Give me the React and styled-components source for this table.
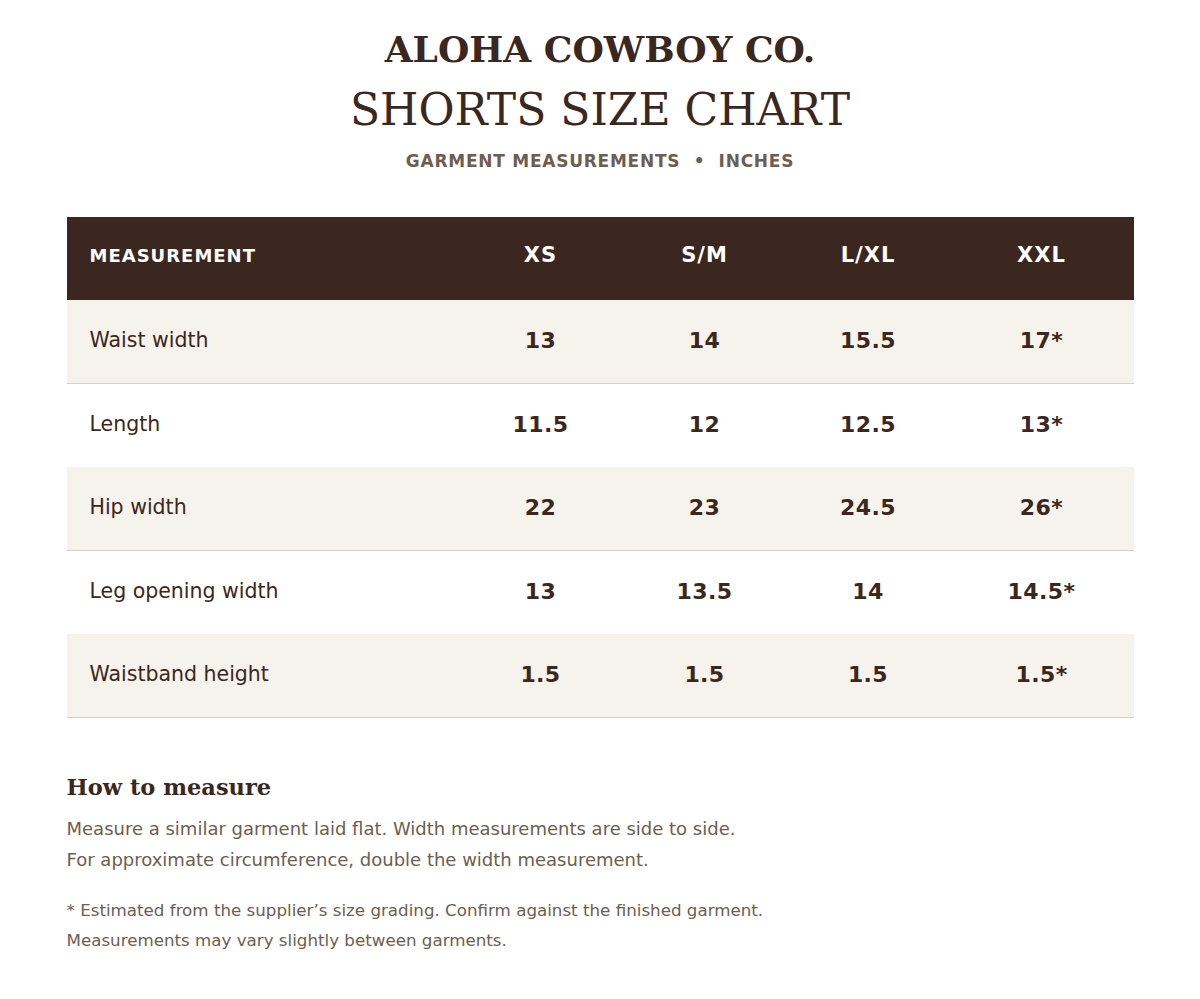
import React from 'react';
import styled, { createGlobalStyle } from 'styled-components';

const GlobalStyle = createGlobalStyle`
  body {
    margin: 0;
    background: #ffffff;
    font-family: "DejaVu Sans", sans-serif;
    color: #3a2720;
  }
`;

const Page = styled.div`
  width: 1067px;
  margin: 0 auto;
  padding: 28px 0 40px;
`;

const Header = styled.header`
  display: flex;
  flex-direction: column;
  align-items: center;
`;

const Brand = styled.h1`
  margin: 0;
  font-family: "DejaVu Serif", serif;
  font-weight: bold;
  font-size: 36px;
  line-height: 42px;
  color: #3a2720;
`;

const Title = styled.h2`
  margin: 12px 0 0;
  font-family: "DejaVu Serif", serif;
  font-weight: normal;
  font-size: 44px;
  line-height: 56px;
  color: #3a2720;
`;

const Subtitle = styled.div`
  margin-top: 13px;
  font-size: 17px;
  font-weight: bold;
  letter-spacing: 0.75px;
  color: #6e5d50;
`;

const Table = styled.div`
  margin-top: 46px;
  display: grid;
  grid-template-columns: 392px 164px 164px 163px 184px;
`;

const Row = styled.div`
  display: contents;
`;

const HeadCell = styled.div`
  height: 83px;
  background: #3b2720;
  color: #ffffff;
  font-weight: bold;
  display: flex;
  align-items: center;
  padding-bottom: 7px;
  box-sizing: border-box;
  justify-content: ${({ $first }) => ($first ? 'flex-start' : 'center')};
  padding-left: ${({ $first }) => ($first ? '23px' : '0')};
  font-size: ${({ $first }) => ($first ? '18px' : '21px')};
  letter-spacing: 1px;
`;

const Cell = styled.div`
  height: 83.5px;
  box-sizing: border-box;
  display: flex;
  align-items: center;
  padding-bottom: 2px;
  background: ${({ $shaded }) => ($shaded ? '#f6f2ec' : '#ffffff')};
  border-bottom: ${({ $shaded }) => ($shaded ? '1.5px solid #d9cfc3' : 'none')};
  justify-content: ${({ $first }) => ($first ? 'flex-start' : 'center')};
  padding-left: ${({ $first }) => ($first ? '23px' : '0')};
  font-size: ${({ $first }) => ($first ? '20.5px' : '22px')};
  letter-spacing: ${({ $first }) => ($first ? '0' : '0.4px')};
  font-weight: ${({ $first }) => ($first ? 'normal' : 'bold')};
  color: #3a2720;
`;

const Notes = styled.section`
  margin-top: 55px;
`;

const NotesTitle = styled.h3`
  margin: 0;
  font-family: "DejaVu Serif", serif;
  font-weight: bold;
  font-size: 22.5px;
  line-height: 28px;
  color: #3a2720;
`;

const Paragraph = styled.p`
  margin: ${({ $gap }) => $gap || '0'};
  font-size: ${({ $small }) => ($small ? '16.7px' : '18px')};
  line-height: ${({ $small }) => ($small ? '30px' : '31px')};
  color: #6e5d50;
`;

const sizes = ['XS', 'S/M', 'L/XL', 'XXL'];

const rows = [
  ['Waist width', '13', '14', '15.5', '17*'],
  ['Length', '11.5', '12', '12.5', '13*'],
  ['Hip width', '22', '23', '24.5', '26*'],
  ['Leg opening width', '13', '13.5', '14', '14.5*'],
  ['Waistband height', '1.5', '1.5', '1.5', '1.5*'],
];

const App = () => (
  <>
    <GlobalStyle />
    <Page>
      <Header>
        <Brand>ALOHA COWBOY CO.</Brand>
        <Title>SHORTS SIZE CHART</Title>
        <Subtitle>GARMENT MEASUREMENTS &nbsp;•&nbsp; INCHES</Subtitle>
      </Header>

      <Table>
        <Row>
          <HeadCell $first>MEASUREMENT</HeadCell>
          {sizes.map((s) => (
            <HeadCell key={s}>{s}</HeadCell>
          ))}
        </Row>
        {rows.map((r, i) => (
          <Row key={r[0]}>
            {r.map((v, j) => (
              <Cell key={j} $first={j === 0} $shaded={i % 2 === 0}>
                {v}
              </Cell>
            ))}
          </Row>
        ))}
      </Table>

      <Notes>
        <NotesTitle>How to measure</NotesTitle>
        <Paragraph $gap="12px 0 0">
          Measure a similar garment laid flat. Width measurements are side to side.
          <br />
          For approximate circumference, double the width measurement.
        </Paragraph>
        <Paragraph $small $gap="20px 0 0">
          * Estimated from the supplier’s size grading. Confirm against the finished garment.
          <br />
          Measurements may vary slightly between garments.
        </Paragraph>
      </Notes>
    </Page>
  </>
);

export default App;
